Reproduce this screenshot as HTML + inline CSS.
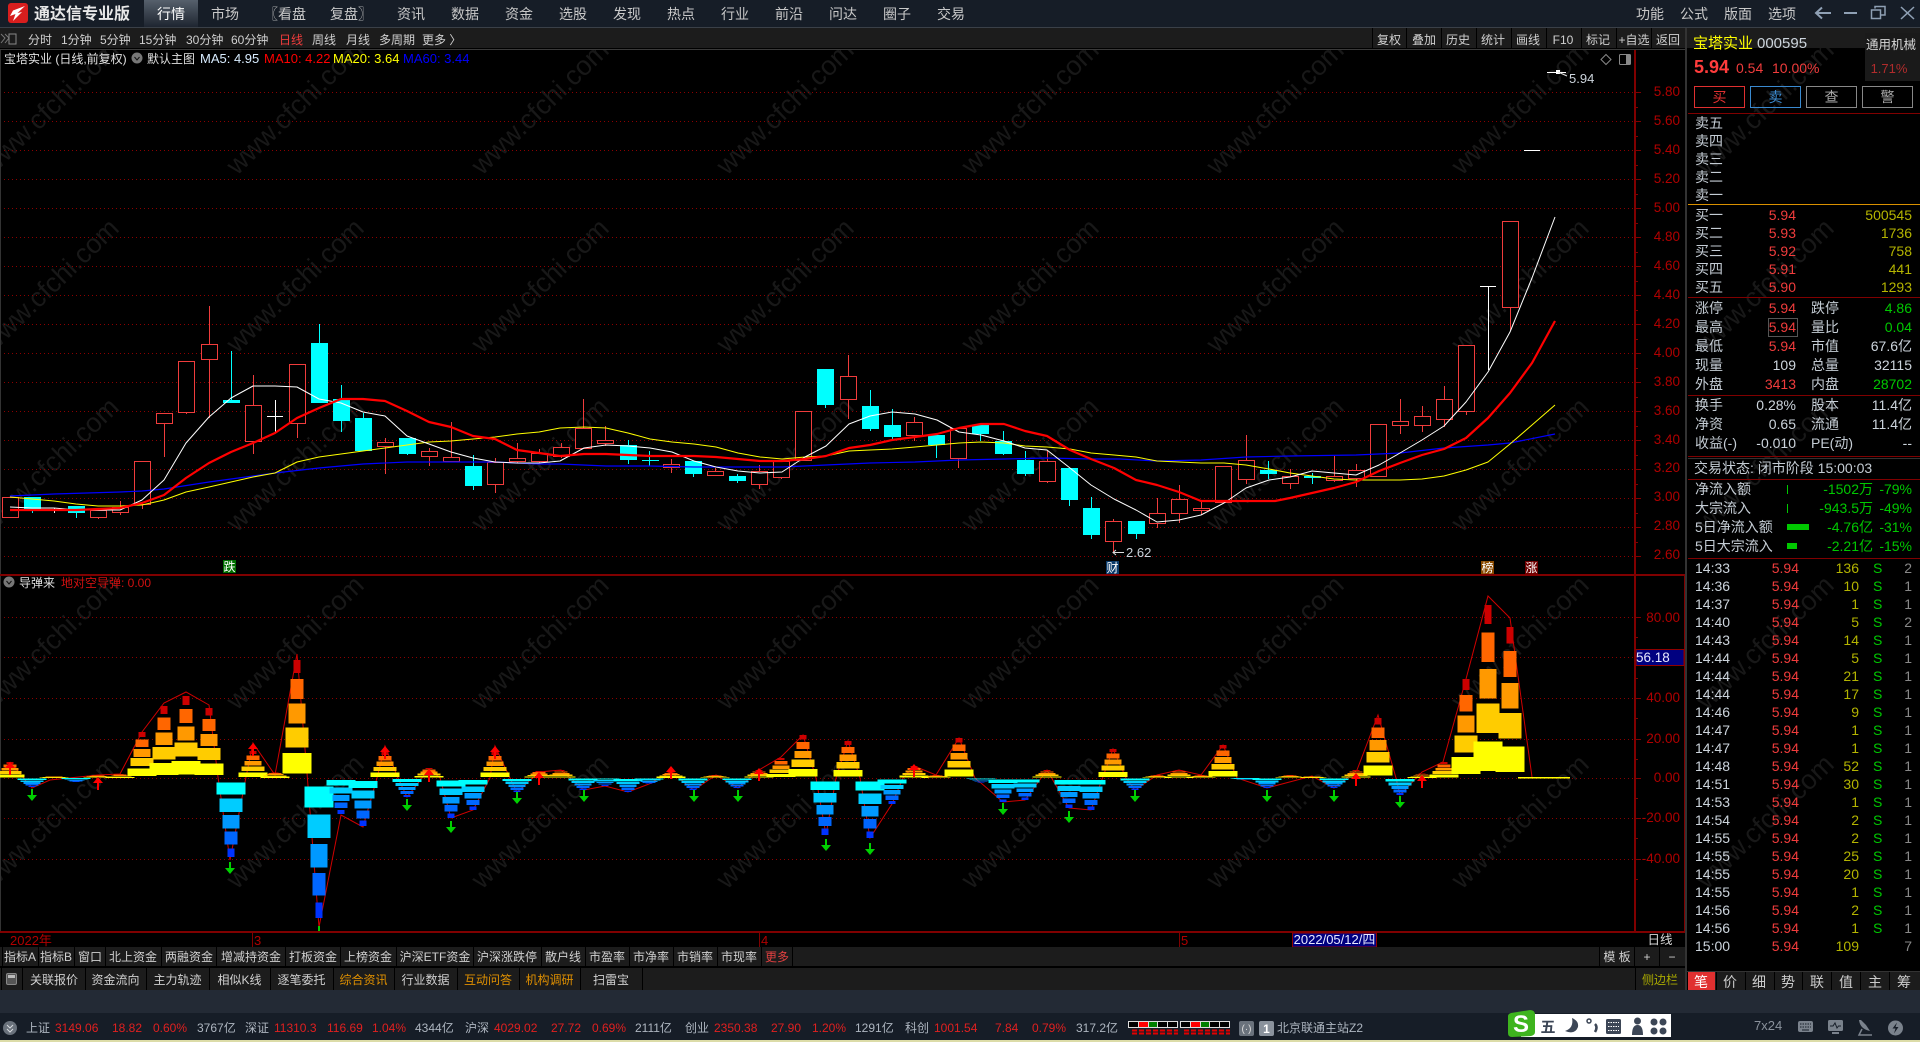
<!DOCTYPE html>
<html lang="zh"><head><meta charset="utf-8"><title>通达信专业版</title>
<style>
html,body{margin:0;padding:0;background:#000;width:1920px;height:1042px;overflow:hidden}
svg{display:block}
text{font-family:"Liberation Sans","Noto Sans CJK SC",sans-serif;font-size:14px;white-space:pre}
.m{fill:#c8c8c8;font-size:14px}
.t{fill:#d0d0d0;font-size:12px}
.b{fill:#d0d0d0;font-size:12px;text-anchor:middle}
.l{fill:#c4ccd4;font-size:14px}
.r{fill:#f03c3c}
.y{fill:#b4b400}
.g{fill:#00c800}
.w{fill:#ccd4dc}
.e{text-anchor:end}
.c{text-anchor:middle}
.ax{fill:#b00000;font-size:13.5px;text-anchor:end}
.wm{fill:#181818;font-size:27px}
.s{font-size:12px}
.sr{fill:#e02020;font-size:12px}
.sg{fill:#aeb6c0;font-size:12px}
</style></head><body>
<svg width="1920" height="1042" viewBox="0 0 1920 1042" xmlns="http://www.w3.org/2000/svg">
<defs>
<linearGradient id="tab" x1="0" y1="0" x2="0" y2="1"><stop offset="0" stop-color="#56606c"/><stop offset="1" stop-color="#1e2530"/></linearGradient>
<g id="u" shape-rendering="crispEdges">
<rect x="-14.5" y="-.21" width="29" height=".17" fill="#ff0"/><rect x="-11.5" y="-.43" width="23" height=".17" fill="#fc0"/><rect x="-8.5" y="-.63" width="17" height=".17" fill="#f90"/><rect x="-6.5" y="-.84" width="13" height=".17" fill="#f60"/><rect x="-3.5" y="-1" width="7" height=".11" fill="#c00"/>
</g>
<g id="d" shape-rendering="crispEdges">
<rect x="-14.5" y=".06" width="29" height=".15" fill="#0ff"/><rect x="-11.5" y=".26" width="23" height=".17" fill="#0cf"/><rect x="-8.5" y=".47" width="17" height=".17" fill="#09f"/><rect x="-6.5" y=".68" width="13" height=".16" fill="#06f"/><rect x="-3.5" y=".89" width="7" height=".11" fill="#03f"/>
</g>
<g id="ga"><rect x="-1" y="0" width="2" height="7" fill="#00d000"/><polygon points="-5,6 5,6 0,12" fill="#00d000"/></g>
<g id="ra"><polygon points="0,0 -5,6 5,6" fill="#f00"/><rect x="-1" y="6" width="2" height="7" fill="#f00"/></g>
</defs>

<rect width="1920" height="1042" fill="#000"/>

<!-- watermark -->
<g class="wm">
<text class="wm" transform="translate(-8 176) rotate(-44)">www.cfchi.com</text><text class="wm" transform="translate(237 176) rotate(-44)">www.cfchi.com</text><text class="wm" transform="translate(482 176) rotate(-44)">www.cfchi.com</text><text class="wm" transform="translate(727 176) rotate(-44)">www.cfchi.com</text><text class="wm" transform="translate(972 176) rotate(-44)">www.cfchi.com</text><text class="wm" transform="translate(1217 176) rotate(-44)">www.cfchi.com</text><text class="wm" transform="translate(1462 176) rotate(-44)">www.cfchi.com</text><text class="wm" transform="translate(1707 176) rotate(-44)">www.cfchi.com</text>
<text class="wm" transform="translate(-8 354) rotate(-44)">www.cfchi.com</text><text class="wm" transform="translate(237 354) rotate(-44)">www.cfchi.com</text><text class="wm" transform="translate(482 354) rotate(-44)">www.cfchi.com</text><text class="wm" transform="translate(727 354) rotate(-44)">www.cfchi.com</text><text class="wm" transform="translate(972 354) rotate(-44)">www.cfchi.com</text><text class="wm" transform="translate(1217 354) rotate(-44)">www.cfchi.com</text><text class="wm" transform="translate(1462 354) rotate(-44)">www.cfchi.com</text><text class="wm" transform="translate(1707 354) rotate(-44)">www.cfchi.com</text>
<text class="wm" transform="translate(-8 533) rotate(-44)">www.cfchi.com</text><text class="wm" transform="translate(237 533) rotate(-44)">www.cfchi.com</text><text class="wm" transform="translate(482 533) rotate(-44)">www.cfchi.com</text><text class="wm" transform="translate(727 533) rotate(-44)">www.cfchi.com</text><text class="wm" transform="translate(972 533) rotate(-44)">www.cfchi.com</text><text class="wm" transform="translate(1217 533) rotate(-44)">www.cfchi.com</text><text class="wm" transform="translate(1462 533) rotate(-44)">www.cfchi.com</text><text class="wm" transform="translate(1707 533) rotate(-44)">www.cfchi.com</text>
<text class="wm" transform="translate(-8 711) rotate(-44)">www.cfchi.com</text><text class="wm" transform="translate(237 711) rotate(-44)">www.cfchi.com</text><text class="wm" transform="translate(482 711) rotate(-44)">www.cfchi.com</text><text class="wm" transform="translate(727 711) rotate(-44)">www.cfchi.com</text><text class="wm" transform="translate(972 711) rotate(-44)">www.cfchi.com</text><text class="wm" transform="translate(1217 711) rotate(-44)">www.cfchi.com</text><text class="wm" transform="translate(1462 711) rotate(-44)">www.cfchi.com</text><text class="wm" transform="translate(1707 711) rotate(-44)">www.cfchi.com</text>
<text class="wm" transform="translate(-8 890) rotate(-44)">www.cfchi.com</text><text class="wm" transform="translate(237 890) rotate(-44)">www.cfchi.com</text><text class="wm" transform="translate(482 890) rotate(-44)">www.cfchi.com</text><text class="wm" transform="translate(727 890) rotate(-44)">www.cfchi.com</text><text class="wm" transform="translate(972 890) rotate(-44)">www.cfchi.com</text><text class="wm" transform="translate(1217 890) rotate(-44)">www.cfchi.com</text><text class="wm" transform="translate(1462 890) rotate(-44)">www.cfchi.com</text><text class="wm" transform="translate(1707 890) rotate(-44)">www.cfchi.com</text>
</g>

<!-- title bar -->
<rect x="0" y="0" width="1920" height="27" fill="#161d27"/>
<rect x="0" y="27" width="1920" height="1" fill="#3a4048"/>
<rect x="144" y="0" width="54" height="27" fill="url(#tab)"/>
<rect x="8" y="3" width="20" height="20" rx="3" fill="#d81e1e"/>
<path d="M25 6 L13 10.500 L10 16 L15.500 14 L13 21 L22 12 L17.500 13 Z" fill="#fff"/>
<text x="34" y="19" fill="#e8e8e8" style="font-size:16px;font-weight:bold">通达信专业版</text>
<g class="m">
<text class="m" x="157" y="19" style="fill:#fff">行情</text><text class="m" x="211" y="19">市场</text><text class="m" x="264" y="19">〖看盘</text><text class="m" x="330" y="19">复盘〗</text><text class="m" x="397" y="19">资讯</text><text class="m" x="451" y="19">数据</text><text class="m" x="505" y="19">资金</text><text class="m" x="559" y="19">选股</text><text class="m" x="613" y="19">发现</text><text class="m" x="667" y="19">热点</text><text class="m" x="721" y="19">行业</text><text class="m" x="775" y="19">前沿</text><text class="m" x="829" y="19">问达</text><text class="m" x="883" y="19">圈子</text><text class="m" x="937" y="19">交易</text>
<text class="m" x="1636" y="19">功能</text><text class="m" x="1680" y="19">公式</text><text class="m" x="1724" y="19">版面</text><text class="m" x="1768" y="19">选项</text>
</g>
<path d="M1831 13H1816M1822 7.500L1816 13L1822 18.500" fill="none" stroke="#8fa0b4" stroke-width="2"/>
<path d="M1844 13H1857" stroke="#8fa0b4" stroke-width="2"/>
<path d="M1875 8.500V6.500H1885V15H1881M1871.500 10H1880.500V18.500H1871.500Z" fill="none" stroke="#8fa0b4" stroke-width="1.500"/>
<path d="M1901 7L1914 19M1914 7L1901 19" stroke="#8fa0b4" stroke-width="1.500"/>

<!-- toolbar -->
<rect x="0" y="28" width="1920" height="20" fill="#1c1c1c"/>
<rect x="0" y="48" width="1686" height="1" fill="#000"/>
<rect x="0" y="49" width="1686" height="1" fill="#3a3a3a"/>
<path d="M1 34L5 38L1 43M5 34L9 38L5 43" fill="none" stroke="#777"/>
<rect x="9" y="34" width="7" height="10" fill="none" stroke="#888"/>
<g class="t">
<text class="t" x="28" y="44">分时</text><text class="t" x="61" y="44">1分钟</text><text class="t" x="100" y="44">5分钟</text><text class="t" x="139" y="44">15分钟</text><text class="t" x="186" y="44">30分钟</text><text class="t" x="231" y="44">60分钟</text><text class="t r" x="279" y="44" style="fill:#f03c3c">日线</text><text class="t" x="312" y="44">周线</text><text class="t" x="346" y="44">月线</text><text class="t" x="379" y="44">多周期</text><text class="t" x="422" y="44">更多 〉</text>
</g>
<path d="M1372.500 28V48M1406.500 28V48M1441.500 28V48M1476.500 28V48M1511.500 28V48M1546.500 28V48M1581.500 28V48M1616.500 28V48M1651.500 28V48" stroke="#000" shape-rendering="crispEdges"/>
<text class="b" x="1389" y="44">复权</text><text class="b" x="1424" y="44">叠加</text><text class="b" x="1458" y="44">历史</text><text class="b" x="1493" y="44">统计</text><text class="b" x="1528" y="44">画线</text><text class="b" x="1563" y="44">F10</text><text class="b" x="1598" y="44">标记</text><text class="b" x="1634" y="44">+自选</text><text class="b" x="1668" y="44">返回</text>

<!-- grids -->
<path d="M0 92.500H1634M0 121.500H1634M0 150.500H1634M0 179.500H1634M0 208.500H1634M0 237.500H1634M0 266.500H1634M0 295.500H1634M0 324.500H1634M0 353.500H1634M0 382.500H1634M0 411.500H1634M0 440.500H1634M0 469.500H1634M0 498.500H1634M0 527.500H1634M0 556.500H1634M0 617.500H1634M0 657.500H1634M0 698.500H1634M0 739.500H1634M0 778.500H1634M0 818.500H1634M0 859.500H1634" stroke="#8c0000" stroke-dasharray="1 3" fill="none" shape-rendering="crispEdges"/>
<rect x="0" y="50" width="1" height="881" fill="#333"/>

<!-- chart header -->
<text x="4" y="63" fill="#e0e0e0" style="font-size:12px">宝塔实业 (日线,前复权)</text>
<circle cx="137" cy="58" r="5.500" fill="#777"/><path d="M134.500 57L137 60L139.500 57" fill="none" stroke="#111"/>
<text x="147" y="63" fill="#e0e0e0" style="font-size:12px">默认主图</text>
<text x="200" y="63" fill="#d8ecff" style="font-size:13px">MA5: 4.95</text>
<text x="264" y="63" fill="#ff0000" style="font-size:13px">MA10: 4.22</text>
<text x="333" y="63" fill="#ffff00" style="font-size:13px">MA20: 3.64</text>
<text x="403" y="63" fill="#0000ff" style="font-size:13px">MA60: 3.44</text>
<path d="M1606 54.500L1611 59.500L1606 64.500L1601 59.500Z" fill="none" stroke="#888"/>
<rect x="1619.500" y="54.500" width="11" height="10" rx="1" fill="none" stroke="#888"/><rect x="1626" y="55" width="4" height="9" fill="#888"/>

<!-- candles -->
<g shape-rendering="crispEdges" fill="none">
<path stroke="#f03c3c" d="M98.500 510V519M120.500 501V515M142.500 461V509M164.500 423V457M186.500 412V414M209.500 306V418M253.500 375V454M297.500 423V438M385.500 438V474M429.500 448V466M451.500 422V461M495.500 458V493M517.500 443V463M539.500 449V463M561.500 443V458M583.500 399V448M605.500 426V446M671.500 459V473M715.500 468V475M759.500 465V489M781.500 461V479M848.500 355V419M914.500 417V441M958.500 428V468M1047.500 451V483M1113.500 519V552M1157.500 498V528M1179.500 485V523M1201.500 502V515M1246.500 435V484M1290.500 469V489M1334.500 456V482M1356.500 464V487M1400.500 399V434M1422.500 406V432M1444.500 386V427M1466.500 411V415M1510.500 307V330"/>
<path stroke="#0ff" d="M32.500 509V513M76.500 513V518M231.500 351V400M319.500 324V343M341.500 385V432M363.500 413V418M407.500 454V455M473.500 455V490M628.500 440V464M649.500 451V466M642 460.500H659M693.500 474V477M737.500 474V483M825.500 405V408M870.500 390V431M892.500 409V440M936.500 445V458M980.500 434V441M1003.500 431V455M1025.500 451V476M1069.500 500V506M1091.500 497V539M1136.500 534V539M1268.500 461V479M1312.500 473V484"/>
<path stroke="#f03c3c" fill="#000" d="M2.500 497.500h16v20h-16zM90.500 510.500h16v7h-16zM112.500 507.500h16v5h-16zM134.500 461.500h16v43h-16zM156.500 413.500h16v10h-16zM178.500 361.500h16v51h-16zM201.500 344.500h16v15h-16zM245.500 405.500h16v36h-16zM289.500 364.500h16v59h-16zM377.500 442.500h16v4h-16zM421.500 451.500h16v5h-16zM443.500 457.500h16v4h-16zM487.500 462.500h16v22h-16zM509.500 458.500h16v3h-16zM531.500 453.500h16v8h-16zM553.500 447.500h16v9h-16zM575.500 428.500h16v20h-16zM597.500 440.500h16v3h-16zM663.500 464.500h16v3h-16zM707.500 471.500h16v4h-16zM751.500 471.500h16v13h-16zM773.500 461.500h16v16h-16zM795.500 411.500h16v49h-16zM840.500 376.500h16v23h-16zM906.500 422.500h16v13h-16zM950.500 428.500h16v30h-16zM1039.500 461.500h16v20h-16zM1105.500 521.500h16v20h-16zM1149.500 513.500h16v10h-16zM1171.500 499.500h16v14h-16zM1193.500 508.500h16v2h-16zM1215.500 466.500h16v36h-16zM1238.500 460.500h16v19h-16zM1282.500 476.500h16v7h-16zM1326.500 476.500h16v4h-16zM1348.500 470.500h16v8h-16zM1370.500 424.500h16v52h-16zM1392.500 421.500h16v4h-16zM1414.500 416.500h16v9h-16zM1436.500 399.500h16v20h-16zM1458.500 345.500h16v66h-16zM1502.500 221.500h16v86h-16z"/>
<path fill="#0ff" d="M24 497h17v12h-17zM68 506h17v7h-17zM223 400h17v3h-17zM311 343h17v60h-17zM333 399h17v22h-17zM355 418h17v33h-17zM399 438h17v16h-17zM465 466h17v20h-17zM620 445h17v15h-17zM685 461h17v13h-17zM729 476h17v5h-17zM817 369h17v36h-17zM862 406h17v23h-17zM884 425h17v12h-17zM928 435h17v10h-17zM972 425h17v9h-17zM995 441h17v13h-17zM1017 460h17v14h-17zM1061 468h17v32h-17zM1083 508h17v27h-17zM1128 521h17v13h-17zM1260 470h17v4h-17zM1304 476h17v2h-17z"/>
<path stroke="#fff" d="M267 416.500H283M275.500 400V433M54.500 508V513M1480 286.500H1496M1488.500 286V370M1524 150.500H1540M1547 72.500H1566"/>
</g>
<rect x="1556" y="70" width="4" height="4" fill="#fff"/><path d="M1558 72L1567 76" stroke="#ddd"/>
<text x="1569" y="83" fill="#ccd4dc" style="font-size:13px">5.94</text>
<path d="M1113 552.500H1124M1116 550L1113 552.500L1116 555" fill="none" stroke="#ddd"/>
<text x="1126" y="557" fill="#ccd4dc" style="font-size:13px">2.62</text>

<!-- MAs -->
<g fill="none" stroke-linejoin="round">
<polyline stroke="#0000ff" stroke-width="1.200" points="10,496 54,494 120,492 142,491 164,489 209,482 275,473 319,468 363,464 407,462 451,462 495,462 539,464 560,464 606,466 650,466 694,467 738,467 782,467 826,465 870,463 915,462 959,460 1004,459 1047,458 1091,459 1120,459 1157,461 1201,460 1246,457 1290,456 1356,455 1400,453 1444,448 1488,445 1510,443 1555,434"/>
<polyline stroke="#ffff00" stroke-width="1" points="10,497 32,499 54,501 76,504 98,506 120,506 142,505 164,500 186,492 209,487 231,482 253,477 275,473 297,462 319,457 341,454 363,451 385,448 407,445 429,442 451,441 473,439 495,437 517,434 539,432 560,428 584,427 606,428 628,433 650,439 672,442 694,444 716,447 738,453 760,457 782,459 805,457 826,456 849,451 870,450 892,449 915,447 937,445 959,443 981,442 1004,443 1025,446 1047,447 1070,449 1091,453 1114,455 1136,457 1157,461 1201,463 1224,463 1246,465 1269,469 1290,473 1312,476 1334,479 1356,480 1379,480 1400,480 1422,479 1444,476 1466,470 1488,462 1510,444 1532,425 1555,405"/>
<polyline stroke="#ffffff" stroke-width="1" points="10,507 32,508 54,508 76,510 120,510 142,500 164,480 186,443 209,417 231,398 253,386 275,386 297,387 319,399 341,403 363,412 385,416 407,436 429,444 451,452 473,458 495,462 517,463 539,463 560,461 584,448 606,445 628,446 650,448 672,452 694,461 716,467 738,471 760,473 782,472 805,457 826,446 849,424 870,416 892,412 915,414 937,420 959,432 981,435 1004,441 1025,448 1047,450 1070,468 1091,485 1114,499 1136,510 1157,522 1179,520 1201,515 1224,503 1246,488 1269,480 1290,477 1312,471 1334,473 1356,475 1379,465 1400,453 1422,440 1444,426 1466,402 1488,372 1510,332 1532,278 1555,217"/>
<polyline stroke="#ff0000" stroke-width="2.200" points="10,510 76,510 120,508 142,503 164,495 186,478 209,463 231,452 253,443 275,433 297,418 319,408 341,399 363,399 385,401 407,411 429,422 451,427 473,436 495,439 517,450 539,453 560,456 584,454 606,454 628,455 650,456 672,456 694,456 716,457 738,459 760,461 782,461 805,459 826,456 849,448 870,445 892,440 915,437 937,434 959,428 981,424 1004,424 1025,431 1047,436 1070,450 1091,459 1114,468 1136,480 1157,485 1179,492 1201,501 1224,501 1246,501 1275,501 1290,498 1312,493 1334,488 1356,482 1379,471 1400,463 1422,455 1444,449 1466,438 1488,418 1510,393 1532,363 1555,321"/>
</g>

<!-- markers -->
<rect x="223" y="560" width="13" height="13" fill="#007000"/><text class="c" x="229.500" y="571" fill="#fff" style="font-size:12px">跌</text>
<rect x="1106" y="561" width="13" height="13" fill="#0a3a6a"/><text class="c" x="1112.500" y="572" fill="#fff" style="font-size:12px">财</text>
<rect x="1481" y="561" width="13" height="13" fill="#8a4a00"/><text class="c" x="1487.500" y="572" fill="#fff" style="font-size:12px">榜</text>
<rect x="1525" y="561" width="13" height="13" fill="#700000"/><text class="c" x="1531.500" y="572" fill="#fff" style="font-size:12px">涨</text>

<!-- sub chart -->
<circle cx="9" cy="582" r="5.500" fill="#777"/><path d="M6.500 581L9 584L11.500 581" fill="none" stroke="#111"/>
<text x="19" y="587" fill="#e0e0e0" style="font-size:12px">导弹来</text>
<text x="61" y="587" fill="#d01010" style="font-size:12px">地对空导弹: 0.00</text>

<polyline fill="none" stroke="#d00000" points="10,762 32,788 50,780 98,775 120,774 142,732 164,703 186,692 209,705 218,777 230,860 246,777 253,743 275,775 297,654 307,773 319,927 341,815 363,827 377,778 385,746 398,778 407,797 429,769 440,778 451,818 473,810 490,778 495,746 510,778 517,792 539,772 561,770 584,790 605,786 628,792 649,784 671,772 694,790 716,775 738,788 759,770 781,757 803,735 816,778 826,835 836,778 848,741 860,778 870,838 892,804 903,778 914,766 936,775 959,738 975,778 981,783 1003,802 1025,800 1047,770 1069,808 1091,810 1113,749 1126,778 1135,790 1157,775 1179,770 1201,775 1223,745 1237,778 1267,788 1312,776 1334,788 1357,770 1378,715 1396,778 1400,795 1422,772 1443,762 1466,679 1488,596 1510,618 1532,777"/>
<rect x="1518" y="777" width="52" height="1.500" fill="#ff0"/>

<use href="#u" transform="translate(10 778) scale(1 16)"/>
<use href="#d" transform="translate(32 778) scale(1 9)"/>
<use href="#u" transform="translate(54 778) scale(1 2)"/>
<use href="#d" transform="translate(76 778) scale(1 4)"/>
<use href="#u" transform="translate(98 778) scale(1 3)"/>
<use href="#u" transform="translate(120 778) scale(1 4)"/>
<use href="#u" transform="translate(142 778) scale(1 46)"/>
<use href="#u" transform="translate(164 778) scale(1 72)"/>
<use href="#u" transform="translate(186 778) scale(1 82)"/>
<use href="#u" transform="translate(209 778) scale(1 70)"/>
<use href="#d" transform="translate(231 778) scale(1 79)"/>
<use href="#u" transform="translate(253 778) scale(1 27)"/>
<use href="#u" transform="translate(275 778) scale(1 6)"/>
<use href="#u" transform="translate(297 778) scale(1 118)"/>
<use href="#d" transform="translate(319 778) scale(1 140)"/>
<use href="#d" transform="translate(341 778) scale(1 36)"/>
<use href="#d" transform="translate(363 778) scale(1 48)"/>
<use href="#u" transform="translate(385 778) scale(1 26)"/>
<use href="#d" transform="translate(407 778) scale(1 19)"/>
<use href="#u" transform="translate(429 778) scale(1 10)"/>
<use href="#d" transform="translate(451 778) scale(1 40)"/>
<use href="#d" transform="translate(473 778) scale(1 32)"/>
<use href="#u" transform="translate(495 778) scale(1 26)"/>
<use href="#d" transform="translate(517 778) scale(1 14)"/>
<use href="#u" transform="translate(539 778) scale(1 7)"/>
<use href="#u" transform="translate(561 778) scale(1 8)"/>
<use href="#d" transform="translate(583 778) scale(1 12)"/>
<use href="#d" transform="translate(605 778) scale(1 8)"/>
<use href="#d" transform="translate(628 778) scale(1 14)"/>
<use href="#d" transform="translate(649 778) scale(1 6)"/>
<use href="#u" transform="translate(671 778) scale(1 6)"/>
<use href="#d" transform="translate(693 778) scale(1 12)"/>
<use href="#u" transform="translate(715 778) scale(1 3)"/>
<use href="#d" transform="translate(737 778) scale(1 10)"/>
<use href="#u" transform="translate(759 778) scale(1 8)"/>
<use href="#u" transform="translate(781 778) scale(1 20)"/>
<use href="#u" transform="translate(803 778) scale(1 43)"/>
<use href="#d" transform="translate(825 778) scale(1 57)"/>
<use href="#u" transform="translate(848 778) scale(1 37)"/>
<use href="#d" transform="translate(870 778) scale(1 60)"/>
<use href="#d" transform="translate(892 778) scale(1 26)"/>
<use href="#u" transform="translate(914 778) scale(1 12)"/>
<use href="#u" transform="translate(936 778) scale(1 3)"/>
<use href="#u" transform="translate(959 778) scale(1 40)"/>
<use href="#d" transform="translate(981 778) scale(1 5)"/>
<use href="#d" transform="translate(1003 778) scale(1 24)"/>
<use href="#d" transform="translate(1025 778) scale(1 22)"/>
<use href="#u" transform="translate(1047 778) scale(1 8)"/>
<use href="#d" transform="translate(1069 778) scale(1 30)"/>
<use href="#d" transform="translate(1091 778) scale(1 32)"/>
<use href="#u" transform="translate(1113 778) scale(1 29)"/>
<use href="#d" transform="translate(1135 778) scale(1 12)"/>
<use href="#u" transform="translate(1157 778) scale(1 3)"/>
<use href="#u" transform="translate(1179 778) scale(1 8)"/>
<use href="#u" transform="translate(1201 778) scale(1 3)"/>
<use href="#u" transform="translate(1223 778) scale(1 33)"/>
<use href="#d" transform="translate(1245 778) scale(1 2)"/>
<use href="#d" transform="translate(1267 778) scale(1 10)"/>
<use href="#u" transform="translate(1290 778) scale(1 3)"/>
<use href="#u" transform="translate(1312 778) scale(1 2)"/>
<use href="#d" transform="translate(1334 778) scale(1 10)"/>
<use href="#u" transform="translate(1356 778) scale(1 8)"/>
<use href="#u" transform="translate(1378 778) scale(1 60)"/>
<use href="#d" transform="translate(1400 778) scale(1 17)"/>
<use href="#u" transform="translate(1422 778) scale(1 5)"/>
<use href="#u" transform="translate(1444 778) scale(1 16)"/>
<use href="#u" transform="translate(1466 778) scale(1 99)"/>
<use href="#u" transform="translate(1488 778) scale(1 173)"/>
<use href="#u" transform="translate(1510 778) scale(1 151)"/>

<use href="#ga" x="32" y="789"/><use href="#ga" x="230" y="862"/><use href="#ga" x="407" y="799"/><use href="#ga" x="451" y="821"/><use href="#ga" x="517" y="792"/><use href="#ga" x="584" y="790"/><use href="#ga" x="694" y="790"/><use href="#ga" x="738" y="790"/><use href="#ga" x="826" y="839"/><use href="#ga" x="870" y="843"/><use href="#ga" x="1003" y="803"/><use href="#ga" x="1069" y="811"/><use href="#ga" x="1135" y="790"/><use href="#ga" x="1267" y="790"/><use href="#ga" x="1334" y="790"/><use href="#ga" x="1400" y="796"/>
<rect x="318" y="926" width="2" height="5" fill="#00d000"/>
<use href="#ra" x="10" y="762"/><use href="#ra" x="98" y="777"/><use href="#ra" x="253" y="743"/><use href="#ra" x="385" y="746"/><use href="#ra" x="429" y="769"/><use href="#ra" x="495" y="746"/><use href="#ra" x="539" y="772"/><use href="#ra" x="671" y="766"/><use href="#ra" x="759" y="768"/><use href="#ra" x="914" y="764"/><use href="#ra" x="1356" y="773"/><use href="#ra" x="1422" y="775"/>

<!-- axis -->
<g fill="#800000" shape-rendering="crispEdges">
<rect x="0" y="574" width="1685" height="2"/><rect x="0" y="931" width="1685" height="2"/>
<rect x="1634" y="50" width="2" height="883"/><rect x="1684" y="574" width="2" height="359"/>
</g>
<path d="M1634 92.500h7M1634 121.500h7M1634 150.500h7M1634 179.500h7M1634 208.500h7M1634 237.500h7M1634 266.500h7M1634 295.500h7M1634 324.500h7M1634 353.500h7M1634 382.500h7M1634 411.500h7M1634 440.500h7M1634 469.500h7M1634 498.500h7M1634 527.500h7M1634 556.500h7M1634 107.500h4M1634 136.500h4M1634 165.500h4M1634 194.500h4M1634 223.500h4M1634 252.500h4M1634 281.500h4M1634 310.500h4M1634 339.500h4M1634 368.500h4M1634 397.500h4M1634 426.500h4M1634 455.500h4M1634 484.500h4M1634 513.500h4M1634 542.500h4M1634 617.500h7M1634 657.500h7M1634 698.500h7M1634 739.500h7M1634 778.500h7M1634 818.500h7M1634 859.500h7M1634 637.500h4M1634 678.500h4M1634 718.500h4M1634 759.500h4M1634 798.500h4M1634 838.500h4M1634 879.500h4" stroke="#800000" shape-rendering="crispEdges"/>
<g>
<text class="ax" x="1680" y="96">5.80</text><text class="ax" x="1680" y="125">5.60</text><text class="ax" x="1680" y="154">5.40</text><text class="ax" x="1680" y="183">5.20</text><text class="ax" x="1680" y="212">5.00</text><text class="ax" x="1680" y="241">4.80</text><text class="ax" x="1680" y="270">4.60</text><text class="ax" x="1680" y="299">4.40</text><text class="ax" x="1680" y="328">4.20</text><text class="ax" x="1680" y="357">4.00</text><text class="ax" x="1680" y="386">3.80</text><text class="ax" x="1680" y="415">3.60</text><text class="ax" x="1680" y="444">3.40</text><text class="ax" x="1680" y="472">3.20</text><text class="ax" x="1680" y="501">3.00</text><text class="ax" x="1680" y="530">2.80</text><text class="ax" x="1680" y="559">2.60</text>
<text class="ax" x="1680" y="622">80.00</text><text class="ax" x="1680" y="702">40.00</text><text class="ax" x="1680" y="743">20.00</text><text class="ax" x="1680" y="782">0.00</text><text class="ax" x="1680" y="822">-20.00</text><text class="ax" x="1680" y="863">-40.00</text>
</g>
<rect x="1636" y="649.500" width="48" height="16" fill="#000080" stroke="#900000"/>
<text x="1636" y="662" fill="#e8e8ff" style="font-size:13.500px">56.18</text>

<!-- time axis -->
<rect x="252" y="933" width="1" height="14" fill="#800000"/><rect x="759" y="933" width="1" height="14" fill="#800000"/><rect x="1179" y="933" width="1" height="14" fill="#800000"/>
<text x="10" y="945" fill="#b00000" style="font-size:13px">2022年</text>
<text x="254" y="945" fill="#b00000" style="font-size:13px">3</text><text x="761" y="945" fill="#b00000" style="font-size:13px">4</text><text x="1181" y="945" fill="#b00000" style="font-size:13px">5</text>
<rect x="1292.500" y="933" width="84" height="14" fill="#000080" stroke="#900000"/>
<text class="c" x="1334.500" y="944" fill="#e8e8ff" style="font-size:13px">2022/05/12/四</text>
<text class="c" x="1660" y="944" fill="#d8d8d8" style="font-size:12.500px">日线</text>

<!-- tab row 1 -->
<rect x="0" y="947" width="1686" height="19" fill="#1c1c1c"/>
<path d="M2.500 947V966M38.500 947V966M74.500 947V966M105.500 947V966M161.500 947V966M216.500 947V966M285.500 947V966M340.500 947V966M396.500 947V966M473.500 947V966M541.500 947V966M585.500 947V966M629.500 947V966M673.500 947V966M717.500 947V966M761.500 947V966M792.500 947V966M1599.500 947V966M1634.500 947V966M1659.500 947V966" stroke="#000" shape-rendering="crispEdges"/>
<g>
<text class="b" x="20" y="961">指标A</text><text class="b" x="56" y="961">指标B</text><text class="b" x="90" y="961">窗口</text><text class="b" x="133" y="961">北上资金</text><text class="b" x="189" y="961">两融资金</text><text class="b" x="251" y="961">增减持资金</text><text class="b" x="313" y="961">打板资金</text><text class="b" x="368" y="961">上榜资金</text><text class="b" x="435" y="961">沪深ETF资金</text><text class="b" x="507" y="961">沪深涨跌停</text><text class="b" x="563" y="961">散户线</text><text class="b" x="607" y="961">市盈率</text><text class="b" x="651" y="961">市净率</text><text class="b" x="695" y="961">市销率</text><text class="b" x="739" y="961">市现率</text><text class="b" x="777" y="961" style="fill:#e04040">更多</text>
<text class="b" x="1617" y="961">模 板</text><text class="b" x="1647" y="961">+</text><text class="b" x="1672" y="961">−</text>
</g>
<rect x="0" y="966" width="1686" height="2" fill="#000"/>
<!-- tab row 2 -->
<rect x="0" y="968" width="1686" height="22" fill="#1c1c1c"/>
<path d="M1.500 968V990M22.500 968V990M85.500 968V990M146.500 968V990M209.500 968V990M270.500 968V990M333.500 968V990M394.500 968V990M457.500 968V990M519.500 968V990M580.500 968V990M642.500 968V990M1635.500 968V990" stroke="#000" shape-rendering="crispEdges"/>
<rect x="6.500" y="973.500" width="10" height="11" rx="1.500" fill="#555" stroke="#888"/><rect x="8" y="975" width="7" height="3" fill="#bbb"/>
<text class="b" x="54" y="984">关联报价</text><text class="b" x="115.500" y="984">资金流向</text><text class="b" x="177.500" y="984">主力轨迹</text><text class="b" x="239.500" y="984">相似K线</text><text class="b" x="301.500" y="984">逐笔委托</text><text class="b" x="363.500" y="984" style="fill:#e09000">综合资讯</text><text class="b" x="425.500" y="984">行业数据</text><text class="b" x="488" y="984" style="fill:#e09000">互动问答</text><text class="b" x="549.500" y="984" style="fill:#e09000">机构调研</text><text class="b" x="611" y="984">扫雷宝</text>
<text class="b" x="1660" y="984" style="fill:#a8a800">侧边栏</text>

<!-- sidebar -->
<rect x="1685" y="28" width="2" height="962" fill="#333"/>
<text x="1693" y="48" fill="#ffff00" style="font-size:15px">宝塔实业</text>
<text x="1757" y="48" fill="#ccd4dc" style="font-size:15px">000595</text>
<rect x="1865" y="33" width="55" height="48" fill="#1a1a1a"/>
<text x="1866" y="49" fill="#d8d8d8" style="font-size:12.500px">通用机械</text>
<text class="c" x="1889" y="73" fill="#b02c2c" style="font-size:13px">1.71%</text>
<text x="1694" y="73" fill="#ff3c3c" style="font-size:18px;font-weight:bold">5.94</text>
<text x="1736" y="73" fill="#f03c3c">0.54</text><text x="1772" y="73" fill="#f03c3c">10.00%</text>
<rect x="1694.500" y="86.500" width="50" height="21" fill="none" stroke="#e03030"/><text class="c" x="1719.500" y="102" fill="#e03030">买</text>
<rect x="1750.500" y="86.500" width="50" height="21" fill="none" stroke="#3a8ad0"/><text class="c" x="1775.500" y="102" fill="#3a8ad0">卖</text>
<rect x="1806.500" y="86.500" width="50" height="21" fill="none" stroke="#888"/><text class="c" x="1831.500" y="102" fill="#aaa">查</text>
<rect x="1862.500" y="86.500" width="50" height="21" fill="none" stroke="#888"/><text class="c" x="1887.500" y="102" fill="#aaa">警</text>
<g fill="#800000" shape-rendering="crispEdges">
<rect x="1688" y="113" width="232" height="1"/><rect x="1688" y="297" width="232" height="1"/><rect x="1688" y="395" width="232" height="1"/><rect x="1688" y="456" width="232" height="1"/><rect x="1688" y="479" width="232" height="1"/><rect x="1688" y="558" width="232" height="1"/>
</g>
<rect x="1688" y="204" width="232" height="1" fill="#d99000"/>
<rect x="1688" y="458" width="232" height="1" fill="#333"/>

<text class="l" x="1695" y="128">卖五</text><text class="l" x="1695" y="146">卖四</text><text class="l" x="1695" y="164">卖三</text><text class="l" x="1695" y="182">卖二</text><text class="l" x="1695" y="200">卖一</text>
<text class="l" x="1695" y="220">买一</text><text class="l" x="1695" y="238">买二</text><text class="l" x="1695" y="256">买三</text><text class="l" x="1695" y="274">买四</text><text class="l" x="1695" y="292">买五</text>
<text class="r e" x="1796" y="220">5.94</text><text class="r e" x="1796" y="238">5.93</text><text class="r e" x="1796" y="256">5.92</text><text class="r e" x="1796" y="274">5.91</text><text class="r e" x="1796" y="292">5.90</text>
<text class="y e" x="1912" y="220">500545</text><text class="y e" x="1912" y="238">1736</text><text class="y e" x="1912" y="256">758</text><text class="y e" x="1912" y="274">441</text><text class="y e" x="1912" y="292">1293</text>

<rect x="1768.500" y="318.500" width="29" height="18" fill="none" stroke="#555"/>
<text class="l" x="1695" y="313">涨停</text><text class="r e" x="1796" y="313">5.94</text><text class="l" x="1811" y="313">跌停</text><text class="g e" x="1912" y="313">4.86</text>
<text class="l" x="1695" y="332">最高</text><text class="r e" x="1796" y="332">5.94</text><text class="l" x="1811" y="332">量比</text><text class="g e" x="1912" y="332">0.04</text>
<text class="l" x="1695" y="351">最低</text><text class="r e" x="1796" y="351">5.94</text><text class="l" x="1811" y="351">市值</text><text class="w e" x="1912" y="351">67.6亿</text>
<text class="l" x="1695" y="370">现量</text><text class="w e" x="1796" y="370">109</text><text class="l" x="1811" y="370">总量</text><text class="w e" x="1912" y="370">32115</text>
<text class="l" x="1695" y="389">外盘</text><text class="r e" x="1796" y="389">3413</text><text class="l" x="1811" y="389">内盘</text><text class="g e" x="1912" y="389">28702</text>
<text class="l" x="1695" y="410">换手</text><text class="w e" x="1796" y="410">0.28%</text><text class="l" x="1811" y="410">股本</text><text class="w e" x="1912" y="410">11.4亿</text>
<text class="l" x="1695" y="429">净资</text><text class="w e" x="1796" y="429">0.65</text><text class="l" x="1811" y="429">流通</text><text class="w e" x="1912" y="429">11.4亿</text>
<text class="l" x="1695" y="448">收益(-)</text><text class="w e" x="1796" y="448">-0.010</text><text class="l" x="1811" y="448">PE(动)</text><text class="w e" x="1912" y="448">--</text>
<text class="l" x="1694" y="473">交易状态: 闭市阶段 15:00:03</text>

<text class="l" x="1695" y="494">净流入额</text><rect x="1787" y="485" width="1" height="9" fill="#00c800"/><text class="g e" x="1873" y="494">-1502万</text><text class="g e" x="1912" y="494">-79%</text>
<text class="l" x="1695" y="513">大宗流入</text><rect x="1787" y="504" width="1" height="9" fill="#00c800"/><text class="g e" x="1873" y="513">-943.5万</text><text class="g e" x="1912" y="513">-49%</text>
<text class="l" x="1695" y="532">5日净流入额</text><rect x="1787" y="524" width="22" height="6" fill="#00c800"/><text class="g e" x="1873" y="532">-4.76亿</text><text class="g e" x="1912" y="532">-31%</text>
<text class="l" x="1695" y="551">5日大宗流入</text><rect x="1787" y="543" width="10" height="6" fill="#00c800"/><text class="g e" x="1873" y="551">-2.21亿</text><text class="g e" x="1912" y="551">-15%</text>

<g>
<text class="w" x="1695" y="573">14:33</text><text class="r e" x="1799" y="573">5.94</text><text class="y e" x="1859" y="573">136</text><text class="g" x="1873" y="573">S</text><text class="e" x="1912" y="573" fill="#888">2</text>
<text class="w" x="1695" y="591">14:36</text><text class="r e" x="1799" y="591">5.94</text><text class="y e" x="1859" y="591">10</text><text class="g" x="1873" y="591">S</text><text class="e" x="1912" y="591" fill="#888">1</text>
<text class="w" x="1695" y="609">14:37</text><text class="r e" x="1799" y="609">5.94</text><text class="y e" x="1859" y="609">1</text><text class="g" x="1873" y="609">S</text><text class="e" x="1912" y="609" fill="#888">1</text>
<text class="w" x="1695" y="627">14:40</text><text class="r e" x="1799" y="627">5.94</text><text class="y e" x="1859" y="627">5</text><text class="g" x="1873" y="627">S</text><text class="e" x="1912" y="627" fill="#888">2</text>
<text class="w" x="1695" y="645">14:43</text><text class="r e" x="1799" y="645">5.94</text><text class="y e" x="1859" y="645">14</text><text class="g" x="1873" y="645">S</text><text class="e" x="1912" y="645" fill="#888">1</text>
<text class="w" x="1695" y="663">14:44</text><text class="r e" x="1799" y="663">5.94</text><text class="y e" x="1859" y="663">5</text><text class="g" x="1873" y="663">S</text><text class="e" x="1912" y="663" fill="#888">1</text>
<text class="w" x="1695" y="681">14:44</text><text class="r e" x="1799" y="681">5.94</text><text class="y e" x="1859" y="681">21</text><text class="g" x="1873" y="681">S</text><text class="e" x="1912" y="681" fill="#888">1</text>
<text class="w" x="1695" y="699">14:44</text><text class="r e" x="1799" y="699">5.94</text><text class="y e" x="1859" y="699">17</text><text class="g" x="1873" y="699">S</text><text class="e" x="1912" y="699" fill="#888">1</text>
<text class="w" x="1695" y="717">14:46</text><text class="r e" x="1799" y="717">5.94</text><text class="y e" x="1859" y="717">9</text><text class="g" x="1873" y="717">S</text><text class="e" x="1912" y="717" fill="#888">1</text>
<text class="w" x="1695" y="735">14:47</text><text class="r e" x="1799" y="735">5.94</text><text class="y e" x="1859" y="735">1</text><text class="g" x="1873" y="735">S</text><text class="e" x="1912" y="735" fill="#888">1</text>
<text class="w" x="1695" y="753">14:47</text><text class="r e" x="1799" y="753">5.94</text><text class="y e" x="1859" y="753">1</text><text class="g" x="1873" y="753">S</text><text class="e" x="1912" y="753" fill="#888">1</text>
<text class="w" x="1695" y="771">14:48</text><text class="r e" x="1799" y="771">5.94</text><text class="y e" x="1859" y="771">52</text><text class="g" x="1873" y="771">S</text><text class="e" x="1912" y="771" fill="#888">1</text>
<text class="w" x="1695" y="789">14:51</text><text class="r e" x="1799" y="789">5.94</text><text class="y e" x="1859" y="789">30</text><text class="g" x="1873" y="789">S</text><text class="e" x="1912" y="789" fill="#888">1</text>
<text class="w" x="1695" y="807">14:53</text><text class="r e" x="1799" y="807">5.94</text><text class="y e" x="1859" y="807">1</text><text class="g" x="1873" y="807">S</text><text class="e" x="1912" y="807" fill="#888">1</text>
<text class="w" x="1695" y="825">14:54</text><text class="r e" x="1799" y="825">5.94</text><text class="y e" x="1859" y="825">2</text><text class="g" x="1873" y="825">S</text><text class="e" x="1912" y="825" fill="#888">1</text>
<text class="w" x="1695" y="843">14:55</text><text class="r e" x="1799" y="843">5.94</text><text class="y e" x="1859" y="843">2</text><text class="g" x="1873" y="843">S</text><text class="e" x="1912" y="843" fill="#888">1</text>
<text class="w" x="1695" y="861">14:55</text><text class="r e" x="1799" y="861">5.94</text><text class="y e" x="1859" y="861">25</text><text class="g" x="1873" y="861">S</text><text class="e" x="1912" y="861" fill="#888">1</text>
<text class="w" x="1695" y="879">14:55</text><text class="r e" x="1799" y="879">5.94</text><text class="y e" x="1859" y="879">20</text><text class="g" x="1873" y="879">S</text><text class="e" x="1912" y="879" fill="#888">1</text>
<text class="w" x="1695" y="897">14:55</text><text class="r e" x="1799" y="897">5.94</text><text class="y e" x="1859" y="897">1</text><text class="g" x="1873" y="897">S</text><text class="e" x="1912" y="897" fill="#888">1</text>
<text class="w" x="1695" y="915">14:56</text><text class="r e" x="1799" y="915">5.94</text><text class="y e" x="1859" y="915">2</text><text class="g" x="1873" y="915">S</text><text class="e" x="1912" y="915" fill="#888">1</text>
<text class="w" x="1695" y="933">14:56</text><text class="r e" x="1799" y="933">5.94</text><text class="y e" x="1859" y="933">1</text><text class="g" x="1873" y="933">S</text><text class="e" x="1912" y="933" fill="#888">1</text>
<text class="w" x="1695" y="951">15:00</text><text class="r e" x="1799" y="951">5.94</text><text class="y e" x="1859" y="951">109</text><text class="e" x="1912" y="951" fill="#888">7</text>
</g>

<!-- sidebar tabs -->
<rect x="1687" y="971" width="233" height="1" fill="#333"/>
<rect x="1688" y="972" width="232" height="18" fill="#1c1c1c"/>
<rect x="1688" y="972" width="27" height="18" fill="#e03030"/>
<path d="M1716.500 972V990M1745.500 972V990M1774.500 972V990M1802.500 972V990M1831.500 972V990M1860.500 972V990M1889.500 972V990" stroke="#000" shape-rendering="crispEdges"/>
<text class="c" x="1701" y="987" fill="#fff">笔</text><text class="c" x="1730" y="987" fill="#ccc">价</text><text class="c" x="1759" y="987" fill="#ccc">细</text><text class="c" x="1788" y="987" fill="#ccc">势</text><text class="c" x="1817" y="987" fill="#ccc">联</text><text class="c" x="1846" y="987" fill="#ccc">值</text><text class="c" x="1875" y="987" fill="#ccc">主</text><text class="c" x="1904" y="987" fill="#ccc">筹</text>

<!-- bottom bands -->
<rect x="0" y="990" width="1920" height="23" fill="#232a35"/>
<rect x="0" y="1013" width="1920" height="27" fill="#161d27"/>
<rect x="0" y="1040" width="1920" height="2" fill="#dcdca8"/>
<circle cx="10" cy="1028" r="7" fill="#6a727c"/><path d="M7 1025L10 1028L13 1025M7 1029L10 1032L13 1029" fill="none" stroke="#d8dce0"/>
<g>
<text class="sg" x="26" y="1032">上证</text><text class="sr" x="55" y="1032">3149.06</text><text class="sr" x="112" y="1032">18.82</text><text class="sr" x="153" y="1032">0.60%</text><text class="sg" x="197" y="1032">3767亿</text>
<text class="sg" x="245" y="1032">深证</text><text class="sr" x="274" y="1032">11310.3</text><text class="sr" x="327" y="1032">116.69</text><text class="sr" x="372" y="1032">1.04%</text><text class="sg" x="415" y="1032">4344亿</text>
<text class="sg" x="465" y="1032">沪深</text><text class="sr" x="494" y="1032">4029.02</text><text class="sr" x="551" y="1032">27.72</text><text class="sr" x="592" y="1032">0.69%</text><text class="sg" x="635" y="1032">2111亿</text>
<text class="sg" x="685" y="1032">创业</text><text class="sr" x="714" y="1032">2350.38</text><text class="sr" x="771" y="1032">27.90</text><text class="sr" x="812" y="1032">1.20%</text><text class="sg" x="855" y="1032">1291亿</text>
<text class="sg" x="905" y="1032">科创</text><text class="sr" x="934" y="1032">1001.54</text><text class="sr" x="995" y="1032">7.84</text><text class="sr" x="1032" y="1032">0.79%</text><text class="sg" x="1076" y="1032">317.2亿</text>
</g>
<g shape-rendering="crispEdges">
<rect x="1128.500" y="1021.500" width="49" height="6" fill="#000" stroke="#ddd"/><rect x="1138" y="1022" width="10" height="5" fill="#f00"/><rect x="1148" y="1022" width="9" height="5" fill="#008000"/><path d="M1138.500 1021V1027M1148.500 1021V1027M1157.500 1021V1027M1167.500 1021V1027" stroke="#ddd"/>
<rect x="1180.500" y="1021.500" width="49" height="6" fill="#000" stroke="#ddd"/><rect x="1190" y="1022" width="10" height="5" fill="#f00"/><rect x="1200" y="1022" width="9" height="5" fill="#008000"/><path d="M1190.500 1021V1027M1200.500 1021V1027M1209.500 1021V1027M1219.500 1021V1027" stroke="#ddd"/>
<path d="M1132 1030.500H1178M1132 1033.500H1178M1184 1030.500H1230M1184 1033.500H1230" stroke="#e00000" stroke-width="2" stroke-dasharray="5 2"/>
</g>
<rect x="1239" y="1021" width="15" height="15" rx="2" fill="#6a727c"/><text class="c" x="1246.500" y="1032" fill="#ddd" style="font-size:10px">(·)</text>
<rect x="1259" y="1021" width="15" height="15" rx="2" fill="#8a929c"/><text class="c" x="1266.500" y="1033" fill="#fff" style="font-size:12px;font-weight:bold">1</text>
<text class="sg" x="1277" y="1032">北京联通主站Z2</text>

<!-- sogou bar -->
<rect x="1521" y="1014" width="150" height="23" fill="#fff"/>
<path d="M1511 1013L1530 1010Q1535 1010 1535 1015L1535 1032Q1535 1035 1531 1036L1512 1037Q1508 1037 1508 1033L1508 1016Q1508 1014 1511 1013Z" fill="#3eb41e"/>
<text class="c" x="1521" y="1032" fill="#fff" style="font-size:24px;font-weight:bold">S</text>
<text class="c" x="1548" y="1032" fill="#3c4656" style="font-size:15px;font-weight:bold">五</text>
<path d="M1572 1018Q1574 1028 1565 1031Q1575 1035 1578 1027Q1579 1021 1572 1018Z" fill="#3c4656"/>
<circle cx="1589" cy="1021" r="2" fill="none" stroke="#3c4656" stroke-width="1.500"/><path d="M1595 1024Q1598 1027 1595 1032" fill="none" stroke="#3c4656" stroke-width="2.500"/>
<rect x="1606" y="1019" width="15" height="15" rx="1.500" fill="#3c4656"/><path d="M1608 1022.500H1619M1608 1026.500H1619M1608 1030.500H1619" stroke="#fff" stroke-dasharray="1.500 1"/>
<circle cx="1637.500" cy="1021" r="3.500" fill="#3c4656"/><path d="M1632 1035Q1632 1025 1637.500 1025Q1643 1025 1643 1035Z" fill="#3c4656"/>
<circle cx="1654" cy="1022" r="3.500" fill="#3c4656"/><circle cx="1663" cy="1022" r="3.500" fill="#3c4656"/><circle cx="1654" cy="1031" r="3.500" fill="#3c4656"/><circle cx="1663" cy="1031" r="3.500" fill="#3c4656"/>

<text x="1754" y="1030" fill="#8a929c" style="font-size:13px">7x24</text>
<rect x="1798" y="1021" width="15" height="11" rx="2" fill="#7a828c"/><path d="M1800 1024H1811M1800 1027H1811" stroke="#161d27" stroke-dasharray="1.500 1"/><path d="M1802 1030H1809" stroke="#161d27"/>
<rect x="1828" y="1020" width="15" height="11" rx="1.500" fill="#7a828c"/><path d="M1830 1026H1833L1835 1023L1837 1028L1838.500 1026H1841" fill="none" stroke="#161d27"/><path d="M1832 1033H1839" stroke="#7a828c" stroke-width="2"/>
<path d="M1859 1020Q1860 1029 1870 1031L1866 1025L1861 1020Z" fill="#7a828c"/><path d="M1862 1029L1859 1035H1872" fill="none" stroke="#7a828c" stroke-width="1.500"/>
<circle cx="1895.500" cy="1028" r="7.500" fill="#7a828c"/><path d="M1897 1022.500L1892.500 1028.500H1895.500L1894 1033.500L1898.500 1027H1895.500Z" fill="#161d27"/>
</svg>
</body></html>
